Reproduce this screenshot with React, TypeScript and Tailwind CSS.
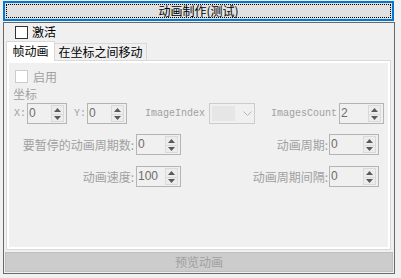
import React from "react";

const cjk = "font-['Noto_Sans_CJK_SC',sans-serif]";
const mono = "font-['Liberation_Mono',monospace]";

function Arrow({ up }: { up?: boolean }) {
  return (
    <svg width="7" height="4" viewBox="0 0 7 4">
      {up ? <path d="M0 4 L3.5 0 L7 4 Z" fill="#5a5a5a" /> : <path d="M0 0 L3.5 4 L7 0 Z" fill="#5a5a5a" />}
    </svg>
  );
}

function Spin({ value, w }: { value: string; w: string }) {
  return (
    <div className={`flex h-[21px] ${w} border border-[#b4b4b4] bg-[#f0f0f0]`}>
      <div className="flex-1 pl-[1px] pt-[3px] text-[12px] leading-none text-[#6d6d6d] font-['Liberation_Sans',sans-serif]">
        {value}
      </div>
      <div className="my-[1px] mr-[2px] flex w-[13px] flex-col border border-[#dadada] bg-[#ececec]">
        <div className="flex h-[9px] items-center justify-center border-b border-[#dadada]">
          <Arrow up />
        </div>
        <div className="flex flex-1 items-center justify-center">
          <Arrow />
        </div>
      </div>
    </div>
  );
}

export default function App() {
  return (
    <div className={`w-[401px] h-[278px] overflow-hidden bg-[#f0f0f0] ${cjk} text-[12px] leading-none`}>
      <div className="ml-[3px] mt-[1px] h-[20px] w-[391px] border-2 border-[#0078d7] bg-[#e1e1e1] p-[1px]">
        <div className="flex h-full items-center justify-center border border-dotted border-black text-black">
          动画制作(测试)
        </div>
      </div>

      <div className="ml-[3px] mt-[1px] flex h-[252px] w-[392px] flex-col overflow-hidden border border-[#696969]">
        <div className="flex h-[18px] shrink-0 items-center pl-[11px]">
          <div className="h-[13px] w-[13px] border border-[#333333] bg-white" />
          <span className="ml-[4px] text-black">激活</span>
        </div>

        <div className="shrink-0 px-[2px]">
          <div className="flex h-[19px] items-end">
            <div className="relative z-10 -mb-px flex h-[20px] w-[49px] items-center justify-center border border-b-0 border-[#d9d9d9] bg-white pb-[1px] text-black">
              帧动画
            </div>
            <div className="flex h-[17px] w-[92px] items-center justify-center border border-b-0 border-l-0 border-[#d9d9d9] bg-[#f0f0f0] text-black">
              在坐标之间移动
            </div>
          </div>

          <div className="h-[190px] w-[385px] border border-[#d9d9d9]">
            <div className="h-full border-2 border-white bg-[#f0f0f0]">
              <div className="flex items-center pl-[6px] pt-[7px]">
                <div className="h-[13px] w-[13px] border border-[#cccccc] bg-white" />
                <span className="ml-[5px] text-[#a0a0a0]">启用</span>
              </div>

              <div className="ml-[4px] mt-[5px] text-[#a0a0a0]">坐标</div>

              <div className="mt-[3px] flex items-center text-[#a0a0a0]">
                <span className={`${mono} ml-[5px] w-[13px] text-[10px]`}>X:</span>
                <Spin value="0" w="w-[40px]" />
                <span className={`${mono} ml-[7px] w-[13px] text-[10px]`}>Y:</span>
                <Spin value="0" w="w-[40px]" />
                <span className={`${mono} ml-[18px] text-[10px]`}>ImageIndex</span>
                <div className="ml-[4px] flex h-[21px] w-[46px] items-center border border-[#cccccc] bg-[#f0f0f0] px-[2px]">
                  <div className="h-[15px] w-[23px] bg-[#e6e6e6]" />
                  <svg className="ml-[8px]" width="9" height="5" viewBox="0 0 9 5">
                    <path d="M0.5 0.5 L4.5 4.5 L8.5 0.5" fill="none" stroke="#b4b4b4" strokeWidth="1" />
                  </svg>
                </div>
                <span className={`${mono} ml-[16px] mr-[2px] text-[10px]`}>ImagesCount</span>
                <Spin value="2" w="w-[45px]" />
              </div>

              <div className="mt-[10px] grid grid-cols-[127px_45px_148px_50px] items-center gap-y-[11px] text-[#a0a0a0]">
                <span className="pr-[2px] text-right">要暂停的动画周期数:</span>
                <Spin value="0" w="w-[45px]" />
                <span className="pr-[1px] text-right">动画周期:</span>
                <Spin value="0" w="w-[50px]" />
                <span className="pr-[2px] text-right">动画速度:</span>
                <Spin value="100" w="w-[45px]" />
                <span className="pr-[1px] text-right">动画周期间隔:</span>
                <Spin value="0" w="w-[50px]" />
              </div>
            </div>
          </div>
        </div>

        <div className="ml-[1px] mt-[2px] flex h-[20px] w-[388px] shrink-0 items-center justify-center border border-[#bfbfbf] bg-[#cccccc] text-[#a0a0a0]">
          预览动画
        </div>
      </div>
    </div>
  );
}
